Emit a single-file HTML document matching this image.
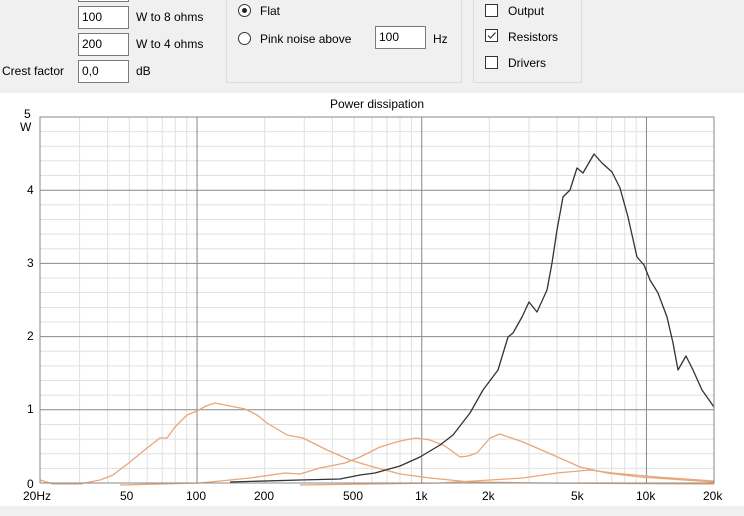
<!DOCTYPE html>
<html><head><meta charset="utf-8"><style>
body{margin:0;width:744px;height:516px;background:#f0f0f0;font-family:"Liberation Sans",sans-serif;font-size:12px;color:#000;position:relative;overflow:hidden}
.a{position:absolute}
.tb{position:absolute;background:#fff;border:1px solid #7a7a7a;box-sizing:border-box;padding:2px 3px;font-size:12px;line-height:16px}
.grp{position:absolute;border:1px solid #dcdcdc;box-sizing:border-box}
.cb{position:absolute;width:13px;height:13px;border:1px solid #333;background:#fff;box-sizing:border-box}
</style></head><body>
<div class="tb" style="left:78px;top:-20px;width:51px;height:22px"></div>
<div class="tb" style="left:78px;top:6px;width:51px;height:23px">100</div>
<div class="a" style="left:136px;top:10px">W to 8 ohms</div>
<div class="tb" style="left:78px;top:33px;width:51px;height:23px">200</div>
<div class="a" style="left:136px;top:37px">W to 4 ohms</div>
<div class="a" style="left:2px;top:64px">Crest factor</div>
<div class="tb" style="left:78px;top:60px;width:51px;height:23px">0,0</div>
<div class="a" style="left:136px;top:64px">dB</div>
<div class="grp" style="left:226px;top:-10px;width:236px;height:93px"></div>
<div class="a" style="left:238px;top:4px;width:13px;height:13px;border:1px solid #333;border-radius:50%;background:#fff;box-sizing:border-box"><div style="position:absolute;left:3px;top:3px;width:5px;height:5px;border-radius:50%;background:#222"></div></div>
<div class="a" style="left:260px;top:4px">Flat</div>
<div class="a" style="left:238px;top:32px;width:13px;height:13px;border:1px solid #333;border-radius:50%;background:#fff;box-sizing:border-box"></div>
<div class="a" style="left:260px;top:32px">Pink noise above</div>
<div class="tb" style="left:375px;top:26px;width:51px;height:23px">100</div>
<div class="a" style="left:433px;top:32px">Hz</div>
<div class="grp" style="left:473px;top:-10px;width:109px;height:93px"></div>
<div class="cb" style="left:485px;top:4px"></div><div class="a" style="left:508px;top:4px">Output</div>
<div class="cb" style="left:485px;top:29px"></div><svg class="a" style="left:485px;top:29px" width="13" height="13"><path d="M3 6.5L5.5 9L10.5 3.5" stroke="#333" fill="none" stroke-width="1.2"/></svg><div class="a" style="left:508px;top:30px">Resistors</div>
<div class="cb" style="left:485px;top:56px"></div><div class="a" style="left:508px;top:56px">Drivers</div>
<svg class="a" style="left:0;top:93px" width="744" height="413" viewBox="0 93 744 413">
<rect x="0" y="93" width="744" height="413" fill="#fff"/>
<text x="377" y="108" font-size="12" text-anchor="middle" font-family="Liberation Sans">Power dissipation</text>
<g stroke="#e0e0e0" stroke-width="1" id="minor"></g>
<g id="g"></g>
<g font-size="12" font-family="Liberation Sans" fill="#000">
<text x="24" y="118">5</text><text x="20" y="131">W</text>
<text x="27" y="194">4</text><text x="27" y="267">3</text><text x="27" y="340">2</text><text x="27" y="413">1</text><text x="27" y="488">0</text>
<text x="23" y="500">20Hz</text><text x="120" y="500">50</text><text x="186" y="500">100</text><text x="254" y="500">200</text><text x="343" y="500">500</text><text x="415" y="500">1k</text><text x="482" y="500">2k</text><text x="571" y="500">5k</text><text x="636" y="500">10k</text><text x="703" y="500">20k</text>
</g>
<g fill="none" stroke-linejoin="round" stroke-width="1.3">
<polyline stroke="#e9a67a" points="40,480 53,484 80,484 100,480 113,475 130,462 147,448 160,438 167,438 175,427 187,415 197,411 206,406 215,403 230,406 245,409 257,415 267,423 287,435 303,438 327,450 350,460 370,466 400,474 430,478 470,482 540,483 714,484"/>
<polyline stroke="#e9a67a" points="120,485 200,483 250,478 285,473 300,474 320,468 345,463 360,457 380,447 400,441 416,438 430,440 445,446 460,457 468,456 477,453 490,438 500,434 523,442 553,455 580,467 607,473 640,477 714,482"/>
<polyline stroke="#e9a67a" points="300,485 440,483 523,478 557,473 590,470 613,473 657,477 714,481"/>
<polyline stroke="#333" points="230,482 300,480 340,479 360,475 375,473 400,466 420,457 440,445 453,435 470,413 483,390 498,370 508,337 513,333 522,317 529,302 537,312 547,290 552,263 557,230 563,197 570,190 577,168 583,173 594,154 602,163 612,172 620,188 628,217 637,257 644,265 650,280 658,293 667,317 673,343 678,370 686,356 693,370 702,390 714,407"/>
</g>
<rect x="40" y="117" width="674" height="366" fill="none" stroke="#888"/>
</svg>
<script>
(function(){
var ns="http://www.w3.org/2000/svg",mi=document.getElementById('minor'),g=document.getElementById('g');
function L(p,x1,y1,x2,y2,c){var l=document.createElementNS(ns,'line');l.setAttribute('x1',x1);l.setAttribute('y1',y1);l.setAttribute('x2',x2);l.setAttribute('y2',y2);if(c)l.setAttribute('stroke',c);p.appendChild(l);}
for(var i=1;i<25;i++){var y=483-i*73.2/5;if(i%5)L(mi,40,y,714,y);}
var fs=[20,30,40,50,60,70,80,90,200,300,400,500,600,700,800,900,2000,3000,4000,5000,6000,7000,8000,9000,20000];
for(var k=0;k<fs.length;k++){var x=40+224.7*Math.log10(fs[k]/20);L(mi,x,117,x,483);}
for(var j=1;j<5;j++){var y=483-j*73.2;L(g,40,y,714,y,'#888');}
[100,1000,10000].forEach(function(f){var x=40+224.7*Math.log10(f/20);L(g,x,117,x,483,'#888');});
})();
</script>
</body></html>
